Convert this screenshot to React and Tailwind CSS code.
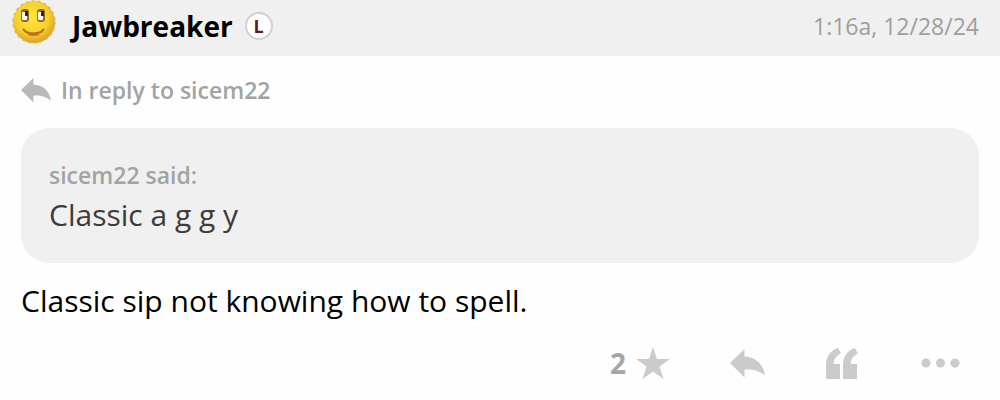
const quote = {
  author: 'sicem22',
  text: 'Classic a g g y',
};

const post = {
  author: 'Jawbreaker',
  badge: 'L',
  time: '1:16a, 12/28/24',
  text: 'Classic sip not knowing how to spell.',
  stars: 2,
};

function SmileyAvatar() {
  return (
    <svg viewBox="0 0 44 44" className="h-11 w-11 shrink-0" aria-hidden="true">
      <defs>
        <radialGradient id="face" cx="45%" cy="40%" r="60%">
          <stop offset="0" stopColor="#ffe636" />
          <stop offset="0.65" stopColor="#f6d12e" />
          <stop offset="1" stopColor="#dba02a" />
        </radialGradient>
      </defs>
      <circle cx="22" cy="22" r="21" fill="url(#face)" />
      <circle cx="22" cy="22" r="21" fill="none" stroke="#e3b75c" strokeWidth="1.5" strokeDasharray="3 3" />
      {/* eyes */}
      <rect x="9" y="9" width="8" height="13" rx="3" fill="#9a6a1c" />
      <rect x="10" y="12" width="5" height="8" rx="1" fill="#fff" />
      <rect x="13" y="11" width="3" height="5" fill="#3d270d" />
      <rect x="25" y="9" width="8" height="13" rx="3" fill="#9a6a1c" />
      <rect x="26" y="12" width="5" height="8" rx="1" fill="#fff" />
      <rect x="29" y="11" width="3" height="5" fill="#3d270d" />
      {/* mouth */}
      <path d="M11 29 L14 32 Q21 35 29 32 L32 29" fill="none" stroke="#b56a1c" strokeWidth="2" strokeLinejoin="round" />
      <path d="M16 34 Q21 36 27 34" fill="none" stroke="#cf6f2a" strokeWidth="2" />
    </svg>
  );
}

function ReplyIcon({ className }) {
  return (
    <svg viewBox="0 0 35 29" className={className} fill="currentColor" aria-hidden="true">
      <path d="M14.5 0 V7.5 C25 8 33 14 35 26.5 C29 21.5 23 20 14.5 20.5 V28.5 L0 14 Z" />
    </svg>
  );
}

function StarIcon() {
  return (
    <svg viewBox="0 0 34 32" className="h-8 w-[34px]" fill="currentColor" aria-hidden="true">
      <path d="M17 0 L21 12 H34 L23.5 19.5 L27.5 32 L17 24.5 L6.5 32 L10.5 19.5 L0 12 H13 Z" />
    </svg>
  );
}

function QuoteIcon() {
  return (
    <svg viewBox="0 0 33 31" className="h-[31px] w-[33px]" fill="currentColor" aria-hidden="true">
      <path d="M12 0 L15 5.5 C10.5 7.5 8 10.5 7.5 16 H14 V31 H0 V17 C0 8.5 4.5 2.5 12 0 Z" />
      <path d="M29 0 L32 5.5 C27.5 7.5 25 10.5 24.5 16 H31 V31 H17 V17 C17 8.5 21.5 2.5 29 0 Z" />
    </svg>
  );
}

function DotsIcon() {
  return (
    <svg viewBox="0 0 39 10" className="h-[10px] w-[39px]" fill="currentColor" aria-hidden="true">
      <circle cx="5" cy="5" r="4.5" />
      <circle cx="19.5" cy="5" r="4.5" />
      <circle cx="34" cy="5" r="4.5" />
    </svg>
  );
}

export default function App() {
  return (
    <article className="min-h-screen bg-[#fefefe] font-['Open_Sans',sans-serif] text-black">
      <header className="flex h-14 items-center bg-[#f0f0f0] pr-[21px] pl-3">
        <div className="flex h-full items-start">
          <SmileyAvatar />
        </div>
        <a href="#author" className="ml-4 pb-1 text-[28px] leading-9 font-bold">
          {post.author}
        </a>
        <span className="mb-1 ml-3 flex h-7 w-7 items-center justify-center rounded-full border-2 border-[#d2d0d1] bg-white text-lg leading-none font-bold text-[#5a1a26]">
          {post.badge}
        </span>
        <time className="ml-auto pb-1 text-[23px] leading-9 text-[#9e9e9e]">{post.time}</time>
      </header>

      <div className="px-[21px]">
        <a href="#parent" className="mt-4 flex items-center gap-[10px] text-[23px] leading-9 font-semibold text-[#a3a3a3]">
          <ReplyIcon className="h-[25px] w-[30px] text-[#b9b9b9]" />
          In reply to {quote.author}
        </a>

        <blockquote className="mt-5 rounded-[28px] bg-[#f0f0f0] px-7 py-7">
          <p className="text-[23px] leading-[39px] font-semibold text-[#a3a3a3]">{quote.author} said:</p>
          <p className="text-3xl leading-10 text-[#3c3c3c]">{quote.text}</p>
        </blockquote>

        <p className="mt-[18px] text-3xl leading-10">{post.text}</p>
      </div>

      <footer className="mt-[18px] flex h-12 items-center justify-end pr-10 text-[#cbcbcb]">
        <button type="button" aria-label="Star this post" className="flex items-center gap-[10px]">
          <span className="text-[28px] leading-9 font-bold text-[#a6a6a6]">{post.stars}</span>
          <StarIcon />
        </button>
        <button type="button" aria-label="Reply" className="ml-[60px]">
          <ReplyIcon className="h-[29px] w-[35px]" />
        </button>
        <button type="button" aria-label="Quote" className="ml-[61px]">
          <QuoteIcon />
        </button>
        <button type="button" aria-label="More options" className="ml-[62px]">
          <DotsIcon />
        </button>
      </footer>
    </article>
  );
}
